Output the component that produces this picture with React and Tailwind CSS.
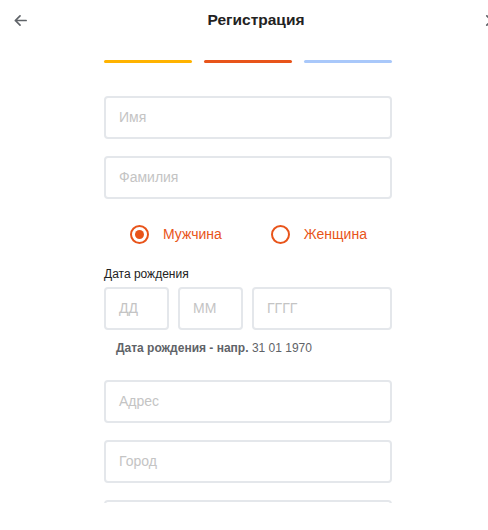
import React from 'react';

const font = { fontFamily: '"Liberation Sans", Arial, sans-serif' };

const TextField = ({ placeholder, className = '' }) => (
  <div
    className={`h-[43px] border-2 border-[#e4e7eb] rounded-[4px] flex items-center px-[13px] text-[14px] text-[#c4c4c4] ${className}`}
  >
    {placeholder}
  </div>
);

const Radio = ({ label, checked }) => (
  <div className="flex items-center gap-[14px]">
    <span className="w-[19px] h-[19px] rounded-full border-2 border-[#e8541a] flex items-center justify-center">
      {checked && <span className="w-[9px] h-[9px] rounded-full bg-[#e8541a]" />}
    </span>
    <span className="text-[14px] text-[#e8541a]">{label}</span>
  </div>
);

const App = () => {
  return (
    <div className="w-[488px] h-[530px] overflow-hidden bg-white" style={font}>
      <div className="w-[512px] flex flex-col h-full">
        <header className="h-[40px] flex items-center justify-between px-[13px] shrink-0">
          <svg width="15" height="15" viewBox="0 0 16 16" fill="none" stroke="#5f6368" strokeWidth="1.8" strokeLinecap="round" strokeLinejoin="round">
            <path d="M14 8H2.5M7.5 3L2.5 8l5 5" />
          </svg>
          <h1 className="text-[15.5px] font-bold text-[#222]">Регистрация</h1>
          <svg width="15" height="15" viewBox="0 0 16 16" fill="none" stroke="#5f6368" strokeWidth="1.8" strokeLinecap="round">
            <path d="M3 3l10 10M13 3L3 13" />
          </svg>
        </header>

        <main className="h-[463px] overflow-hidden shrink-0">
          <div className="w-[288px] ml-[104px] flex flex-col">
            <div className="flex gap-[12px] mt-[20px]">
              <div className="h-[3px] flex-1 rounded-full bg-[#ffb300]" />
              <div className="h-[3px] flex-1 rounded-full bg-[#e8541a]" />
              <div className="h-[3px] flex-1 rounded-full bg-[#a9c8fa]" />
            </div>

            <TextField placeholder="Имя" className="mt-[33px]" />
            <TextField placeholder="Фамилия" className="mt-[17px]" />

            <div className="flex gap-[49px] pl-[26px] mt-[25px]">
              <Radio label="Мужчина" checked />
              <Radio label="Женщина" />
            </div>

            <div className="text-[12px] text-[#222] mt-[22px] leading-[14px]">Дата рождения</div>
            <div className="flex gap-[9px] mt-[6px]">
              <TextField placeholder="ДД" className="w-[65px]" />
              <TextField placeholder="ММ" className="w-[65px]" />
              <TextField placeholder="ГГГГ" className="flex-1" />
            </div>
            <div className="text-[12px] text-[#5f6368] mt-[11px] pl-[12px] leading-[14px]">
              <span className="font-bold">Дата рождения - напр.</span> 31 01 1970
            </div>

            <TextField placeholder="Адрес" className="mt-[25px]" />
            <TextField placeholder="Город" className="mt-[17px]" />
            <TextField placeholder="" className="mt-[17px]" />
          </div>
        </main>
      </div>
    </div>
  );
};

export default App;
